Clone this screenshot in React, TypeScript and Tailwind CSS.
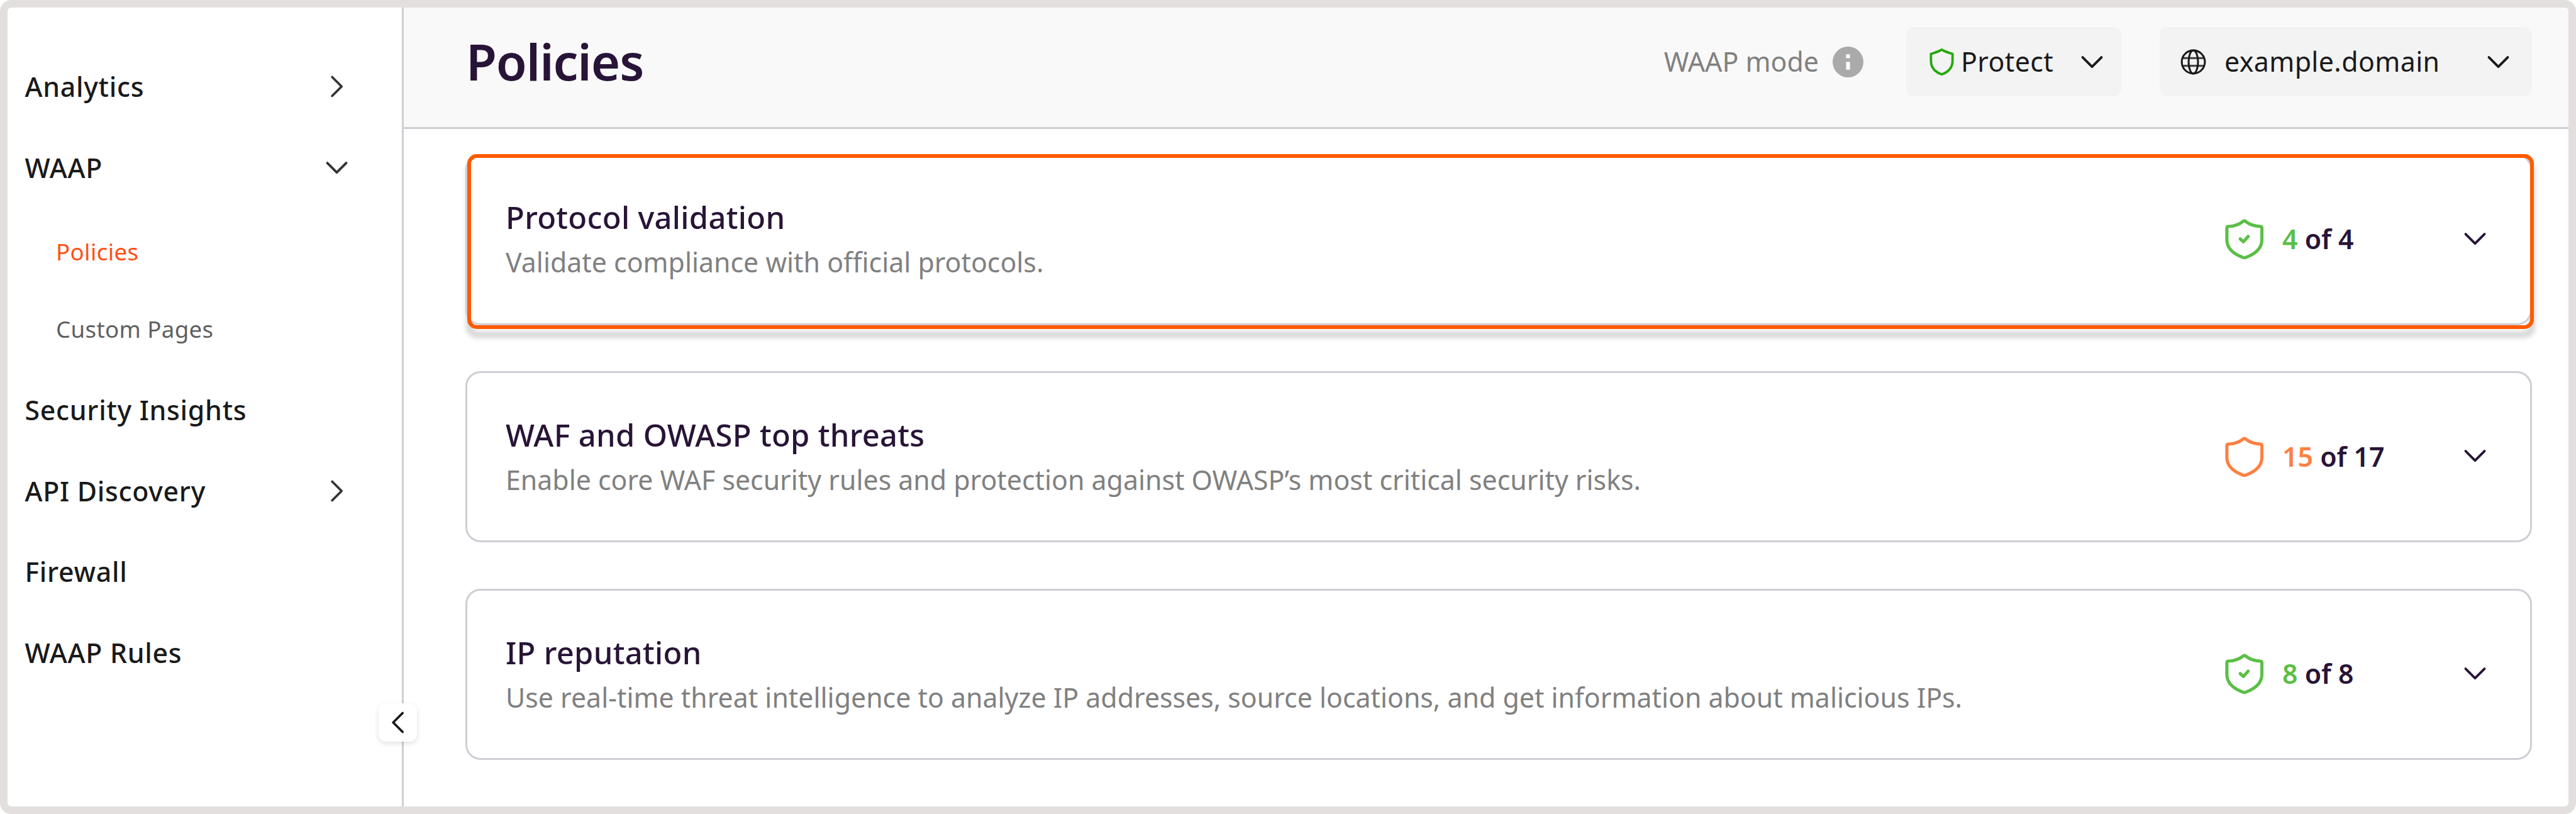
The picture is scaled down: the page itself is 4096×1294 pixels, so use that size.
import React from "react";

const FONT = "font-['Noto_Sans',sans-serif]";

type ChevronProps = { dir: "down" | "right" | "left"; color: string };

const chevronPaths = {
  down: "M3.1 5.6 8 10.5 12.9 5.6",
  right: "M5.6 3.1 10.5 8 5.6 12.9",
  left: "M10.5 3.1 5.6 8 10.5 12.9",
};

function Chevron({ dir, color }: ChevronProps) {
  return (
    <svg viewBox="0 0 16 16" className="size-[49px] shrink-0" fill="none" stroke={color} strokeWidth="1.25" strokeLinecap="round" strokeLinejoin="round">
      <path d={chevronPaths[dir]} />
    </svg>
  );
}

function Shield({ checked, color }: { checked: boolean; color: string }) {
  return (
    <svg viewBox="0 0 24 24" className="size-[73.4px] shrink-0" fill="none" stroke={color} strokeWidth="1.65" strokeLinecap="round" strokeLinejoin="round">
      <path d="M11.3 2.6Q12 2.1 12.7 2.6C14.9 4.4 17.2 5.1 20.4 5.25Q21.1 5.35 21.1 6V12.2C21.1 16.8 17.8 19.5 12.6 21.4Q12 21.6 11.4 21.4C6.2 19.5 2.9 16.8 2.9 12.2V6Q2.9 5.35 3.6 5.25C6.8 5.1 9.1 4.4 11.3 2.6Z" />
      {checked && <path d="M9.85 11.7 11.5 13.2 14 10.4" />}
    </svg>
  );
}

function NavItem({ label, dir }: { label: string; dir?: "down" | "right" }) {
  return (
    <div className="flex h-[128.5px] items-center justify-between pr-[79.5px] pl-[27.5px] text-[42.83px] font-medium tracking-[0.7px] text-[#1a1a1a]">
      <span className="pt-px">{label}</span>
      {dir && <Chevron dir={dir} color="#333333" />}
    </div>
  );
}

const policies = [
  { title: "Protocol validation", text: "Validate compliance with official protocols.", on: 4, total: 4, active: true },
  { title: "WAF and OWASP top threats", text: "Enable core WAF security rules and protection against OWASP’s most critical security risks.", on: 15, total: 17 },
  { title: "IP reputation", text: "Use real-time threat intelligence to analyze IP addresses, source locations, and get information about malicious IPs.", on: 8, total: 8 },
];

function PolicyCard({ title, text, on, total, active }: (typeof policies)[number]) {
  const full = on === total;
  return (
    <div className="relative isolate">
      {active && (
        <div className="absolute top-[12px] left-[3px] h-[278px] w-[3286px] rounded-[15px] border-[6px] border-black/28 blur-[5px]" />
      )}
      <div className="relative flex h-[272px] items-center justify-between rounded-[24px] border-[3px] border-[#cfced5] bg-white pr-[63px] pl-[61px]">
        <div className="flex flex-col pb-[1px]">
          <h2 className="text-[48.94px] leading-[73px] font-medium tracking-[0.28px] text-[#281437]">{title}</h2>
          <p className="text-[42.83px] leading-[69px] text-[#808080]">{text}</p>
        </div>
        <div className="flex items-center">
          <Shield checked={full} color={full ? "#5bbf46" : "#ff8040"} />
          <div className="ml-[24px] w-[282px] pb-[1px] text-[42.83px] font-semibold whitespace-pre text-[#281437]">
            <span className={full ? "text-[#5bbf46]" : "text-[#ff8040]"}>{on}</span> of {total}
          </div>
          <div className="pb-[3px]">
            <Chevron dir="down" color="#281437" />
          </div>
        </div>
      </div>
      {active && (
        <div className="absolute top-0 left-[3px] h-[278px] w-[3286px] rounded-[15px] border-[6px] border-[#ff5a00]" />
      )}
    </div>
  );
}

export default function App() {
  return (
    <div className={`flex h-[1294px] w-[4096px] overflow-hidden rounded-[18px] border-[12px] border-[#e2dfde] bg-white ${FONT}`}>
      <aside className="relative flex w-[630px] shrink-0 flex-col border-r-[3px] border-[#cfced5] pt-[61.5px]">
        <NavItem label="Analytics" dir="right" />
        <NavItem label="WAAP" dir="down" />
        <div className="flex flex-col pt-px pb-[10.7px] pl-[77px] text-[36.7px] tracking-[0.35px]">
          <div className="flex h-[139px] items-center text-[#ff5013]">Policies</div>
          <div className="flex h-[106.4px] items-center text-[#606060]">Custom Pages</div>
        </div>
        <NavItem label="Security Insights" />
        <NavItem label="API Discovery" dir="right" />
        <NavItem label="Firewall" />
        <NavItem label="WAAP Rules" />
        <button className="absolute top-[1106px] left-[590px] flex size-[61px] items-center justify-center rounded-[12px] bg-white shadow-[0_3px_8px_rgba(0,0,0,0.12)]">
          <Chevron dir="left" color="#1a1a1a" />
        </button>
      </aside>
      <main className="flex min-w-0 grow flex-col">
        <header className="flex h-[193px] items-center justify-between border-b-[3px] border-[#cfced5] bg-[#f9f9f9] pr-[58px] pb-[18px] pl-[99px]">
          <h1 className="text-[79.5px] font-semibold tracking-[-1.1px] text-[#281437]">Policies</h1>
          <div className="flex items-center">
            <span className="text-[42.83px] text-[#808080]">WAAP mode</span>
            <svg viewBox="0 0 16 16" className="ml-[22px] size-[49px]">
              <circle cx="8" cy="8" r="8" fill="#aaaaaa" />
              <path d="M7 4h2v2H7zM7 8h2v4H7z" fill="#ffffff" />
            </svg>
            <div className="ml-[68px] flex h-[110px] w-[342px] items-center rounded-[12px] bg-[#f3f3f3] pr-[22px] pl-[32px] text-[42.83px] tracking-[0.4px] text-[#1a1a1a]">
              <svg viewBox="0 0 16 16" className="size-[49px] shrink-0" fill="none" stroke="#23a80c" strokeWidth="1.25" strokeLinejoin="round">
                <path d="M8 1.6C9.6 2.7 11.6 3.2 13.6 3.8V7.5C13.6 10.9 11.4 13.4 8 14.4C4.6 13.4 2.4 10.9 2.4 7.5V3.8C4.4 3.2 6.4 2.7 8 1.6Z" />
              </svg>
              <span className="ml-[6px] grow">Protect</span>
              <Chevron dir="down" color="#1a1a1a" />
            </div>
            <div className="ml-[61px] flex h-[110px] w-[592px] items-center rounded-[12px] bg-[#f3f3f3] pr-[29.5px] pl-[29px] text-[42.83px] tracking-[0.4px] text-[#1a1a1a]">
              <svg viewBox="0 0 16 16" className="size-[49px] shrink-0" fill="none" stroke="#1a1a1a" strokeWidth="1">
                <path d="M2.5 6H13.5M2.5 10H13.5" stroke="#484848" />
                <circle cx="8" cy="8" r="6" />
                <ellipse cx="8" cy="8" rx="2.45" ry="6" />
              </svg>
              <span className="ml-[25px] grow">example.domain</span>
              <Chevron dir="down" color="#1a1a1a" />
            </div>
          </div>
        </header>
        <div className="flex flex-col gap-[73.7px] pt-[39.7px] pr-[58px] pl-[98px]">
          {policies.map((p) => (
            <PolicyCard key={p.title} {...p} />
          ))}
        </div>
      </main>
    </div>
  );
}
